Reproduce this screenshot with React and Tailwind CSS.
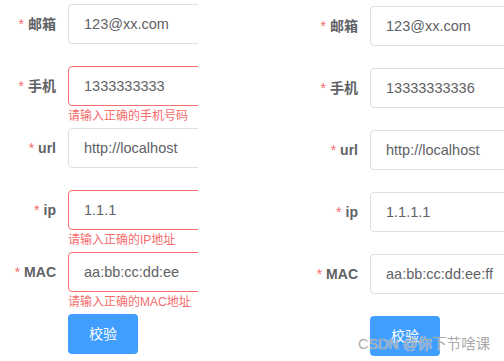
import React from 'react'

const FONT = { fontFamily: '"Liberation Sans", "Noto Sans CJK SC", sans-serif' }

const LEFT = [
  { label: '邮箱', value: '123@xx.com' },
  { label: '手机', value: '1333333333', error: '请输入正确的手机号码' },
  { label: 'url', value: 'http://localhost' },
  { label: 'ip', value: '1.1.1', error: '请输入正确的IP地址' },
  { label: 'MAC', value: 'aa:bb:cc:dd:ee', error: '请输入正确的MAC地址' },
]

const RIGHT = [
  { label: '邮箱', value: '123@xx.com' },
  { label: '手机', value: '13333333336' },
  { label: 'url', value: 'http://localhost' },
  { label: 'ip', value: '1.1.1.1' },
  { label: 'MAC', value: 'aa:bb:cc:dd:ee:ff' },
]

function FormItem({ label, value, error, labelW }) {
  return (
    <div className="flex mb-[22px] h-10">
      <label
        className="shrink-0 text-right pr-3 text-sm font-bold leading-10 text-[#606266]"
        style={{ width: labelW }}
      >
        <span className="text-[#F56C6C] mr-1 font-normal">*</span>
        {label}
      </label>
      <div className="relative shrink-0 w-[220px]">
        <div
          className={
            'h-10 rounded border bg-white px-[15px] text-[14.5px] leading-[38px] text-[#606266] ' +
            (error ? 'border-[#F56C6C]' : 'border-[#DCDFE6]')
          }
        >
          {value}
        </div>
        {error && (
          <div className="absolute left-0 top-full pt-1 text-xs leading-none text-[#F56C6C] whitespace-nowrap">
            {error}
          </div>
        )}
      </div>
    </div>
  )
}

function Form({ items, labelW }) {
  return (
    <div>
      {items.map((it) => (
        <FormItem key={it.label} {...it} labelW={labelW} />
      ))}
      <div className="flex">
        <div className="shrink-0" style={{ width: labelW }} />
        <button className="w-[70px] h-10 rounded bg-[#409EFF] text-white text-sm">校验</button>
      </div>
    </div>
  )
}

export default function App() {
  return (
    <div className="relative w-[504px] h-[361px] bg-white overflow-hidden flex" style={FONT}>
      <div className="w-[198px] shrink-0 overflow-hidden pt-1">
        <Form items={LEFT} labelW={68} />
      </div>
      <div className="ml-[92px] w-[214px] shrink-0 overflow-hidden pt-[6px]">
        <Form items={RIGHT} labelW={80} />
      </div>
      <div className="absolute left-[358px] top-[334px] text-[14.5px] leading-5 text-[#999999]/85 whitespace-nowrap [text-shadow:0_0_1px_#fff]">
        CSDN @你下节啥课
      </div>
    </div>
  )
}
